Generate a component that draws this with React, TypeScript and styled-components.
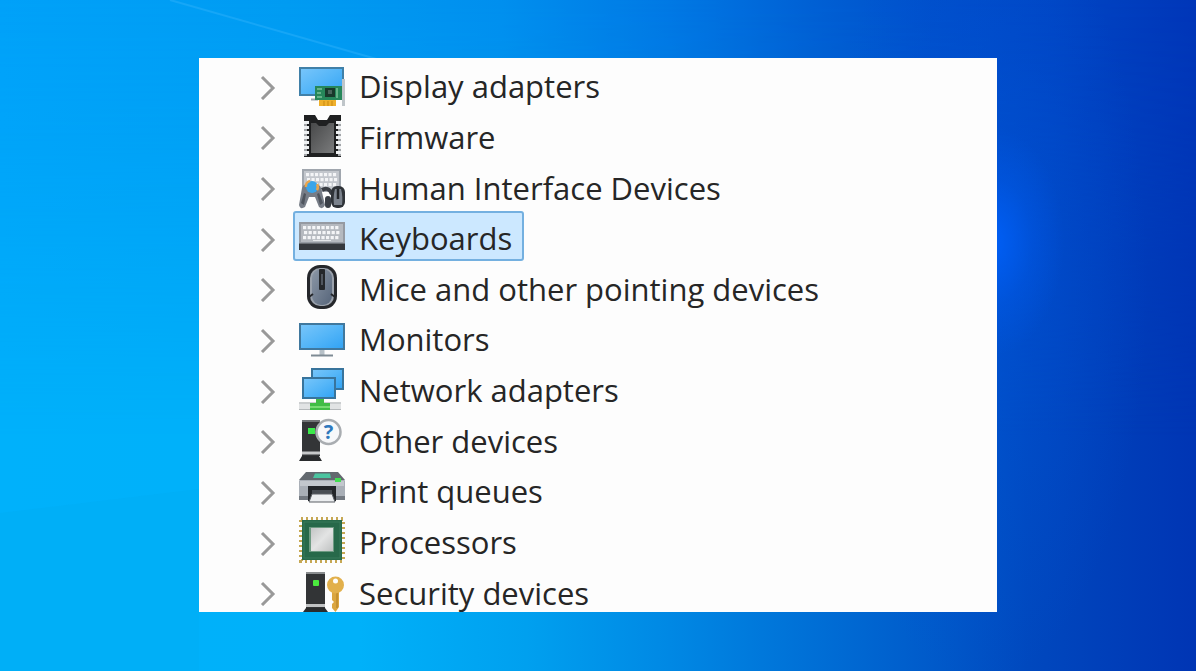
import React from "react";
import styled, { createGlobalStyle } from "styled-components";

const GlobalStyle = createGlobalStyle`
  * { box-sizing: border-box; }
  html, body, #root { margin: 0; height: 100%; }
`;

const Desktop = styled.main`
  position: relative;
  isolation: isolate;
  min-height: 100vh;
  padding: 58px 199px 59px;
  font-family: "Open Sans", "Segoe UI", sans-serif;
  color: #262626;
  background: linear-gradient(90deg, #00b1fb 0%, #00b1f9 30%, #00a0ef 44%, #0088e4 56%, #006fd6 68%, #005aca 78%, #0048be 86%, #0035b4 100%);

  &::before {
    content: "";
    position: absolute;
    inset: 0;
    z-index: -2;
    background: linear-gradient(90deg, #00a1f9 0%, #009bf2 24%, #008fee 42%, #0078e4 56%, #0060d4 68%, #004fca 78%, #0046c4 88%, #0036b8 100%);
    mask-image: linear-gradient(180deg, #000 0%, rgba(0, 0, 0, 0.8) 20%, transparent 65%);
  }

  &::after {
    content: "";
    position: absolute;
    inset: 0;
    z-index: -1;
    background:
      radial-gradient(ellipse 6% 17% at 83% 36%, rgba(0, 98, 255, 0.8), rgba(0, 98, 255, 0.25) 55%, rgba(0, 98, 255, 0)),
      radial-gradient(ellipse 14% 60% at 82% 42%, rgba(0, 84, 220, 0.5), rgba(0, 84, 220, 0));
  }
`;

const Rays = styled.svg`
  position: absolute;
  inset: 0;
  z-index: -1;
  width: 100%;
  height: 100%;
`;

const Panel = styled.section`
  height: calc(100vh - 117px);
  min-height: 554px;
  padding: 1px 0 0 56px;
  background: #fdfdfd;
`;

const Tree = styled.ul`
  display: grid;
  grid-auto-rows: 1fr;
  height: calc(100% + 4px);
  margin: 0;
  padding: 0;
  list-style: none;
`;

const Row = styled.li`
  display: flex;
  align-items: center;
  gap: 12px;
`;

const Toggle = styled.button`
  display: flex;
  padding: 5px 0 0;
  border: 0;
  background: none;
`;

const Item = styled.a<{ $selected?: boolean }>`
  display: flex;
  align-items: center;
  gap: 14px;
  height: 50px;
  padding: 4px 10px 0 4px;
  border: 2px solid ${(p) => (p.$selected ? "#74b0e0" : "transparent")};
  border-radius: 3px;
  background: ${(p) => (p.$selected ? "#cce8ff" : "transparent")};
  color: inherit;
  text-decoration: none;
`;

const Label = styled.span`
  font-size: 31px;
  line-height: 36px;
  white-space: nowrap;
`;

const IconBox = styled.svg`
  display: block;
  flex: none;
  width: 46px;
  height: 46px;
  overflow: visible;
`;

const keyRows = (x: number, y: number, cols: number, pitch: number) =>
  [0, 1, 2].flatMap((r) =>
    Array.from({ length: cols }, (_, c) => (
      <rect key={`${r}-${c}`} x={x + c * pitch + (r % 2)} y={y + r * 5} width={pitch - 1.4} height="3.2" fill="#f4f5f7" />
    ))
  );

const DisplayIcon = () => (
  <>
    <rect x="1" y="5" width="43" height="27" fill="url(#screen)" stroke="#4080a8" strokeWidth="2" />
    <path d="M12 36.500H19" stroke="#9aa3a8" strokeWidth="2" />
    <rect x="20" y="36" width="17" height="7" fill="#efb02c" />
    <path d="M25 38V43M29 38V43M33 38V43" stroke="#c98910" />
    <rect x="16" y="23" width="28" height="14" fill="#26875a" />
    <path d="M18 26H23M18 30H22M18 34H23M38 25V35" stroke="#7cc39b" strokeWidth="1.500" />
    <rect x="26" y="25" width="10" height="9" fill="#18392b" />
    <rect x="29" y="27" width="4" height="4" fill="#49645a" />
    <rect x="43" y="16" width="3" height="27" fill="#bfc5c9" />
  </>
);

const FirmwareIcon = () => (
  <>
    <path d="M5 1H16L19 6H28L31 1H42V43H5Z" fill="#1f2021" />
    <path d="M12 9H17L20 12H27L30 9H35V39H12Z" fill="url(#chip)" />
    {[7, 12, 17, 22, 27, 32, 37].map((y) => (
      <React.Fragment key={y}>
        <rect x="5" y={y} width="5" height="3" fill="#eef0f2" />
        <rect x="37" y={y} width="5" height="3" fill="#eef0f2" />
        <rect x="5" y={y + 3} width="3" height="2" fill="#a3a6a9" />
        <rect x="39" y={y + 3} width="3" height="2" fill="#a3a6a9" />
      </React.Fragment>
    ))}
  </>
);

const HidIcon = () => (
  <>
    <path d="M3 4H42V27H3Z" fill="#a0a6ae" />
    <path d="M5 6H40V25H5Z" fill="#c3c7cd" />
    {keyRows(7, 8, 7, 4.5)}
    <path d="M23 25Q29 21 33 29" fill="none" stroke="#3b3f45" strokeWidth="4" />
    <path d="M0 40L3 23Q5 18 12.500 18T22 23L26 40Q24 45 20 42L16 32H10L6 42Q1 45 0 40Z" fill="#777d87" />
    <path d="M2 38L5 28L7 29L5 40ZM24 38L20 28L18 29L21 40Z" fill="#4f555e" />
    <circle cx="13" cy="22" r="6" fill="#3aa5ea" />
    <path d="M7 22A5 5 0 0 1 11 16M18 19A6 6 0 0 1 18 25" fill="none" stroke="#e9a54c" strokeWidth="2.500" />
    <rect x="32" y="21" width="14" height="22" rx="6" fill="#2f3338" />
    <path d="M36 24H42Q44 31 43 40H35Q34 31 36 24Z" fill="#7b828c" />
    <path d="M39 24V34" stroke="#24272b" strokeWidth="2.500" />
    <rect x="26" y="31" width="6" height="12" rx="3" fill="#3a3f46" />
  </>
);

const KeyboardIcon = () => (
  <>
    <rect x="0" y="7" width="46" height="24" fill="#959aa2" />
    <rect x="2" y="9" width="42" height="18" fill="#b5b9bf" />
    {keyRows(4, 11, 8, 4.6)}
    <path d="M14 25.500H32" stroke="#e5e7ea" />
    <rect x="0" y="28" width="46" height="7" fill="#35383d" />
    <path d="M0 28.500H46" stroke="#6b6f75" />
  </>
);

const MouseIcon = () => (
  <>
    <rect x="8" y="-1" width="30" height="44" rx="13" fill="#25272b" />
    <rect x="11" y="2" width="24" height="38" rx="10" fill="#9ba2ac" />
    <rect x="13" y="3" width="20" height="36" rx="9" fill="url(#mouse)" />
    <path d="M10 31L14 28M36 31L32 28" stroke="#25272b" strokeWidth="2" />
    <rect x="20" y="3" width="6" height="21" rx="1" fill="#24272b" />
    <path d="M23 8V19" stroke="#50565f" strokeWidth="2" />
  </>
);

const MonitorIcon = () => (
  <>
    <rect x="1" y="8" width="44" height="25" fill="url(#screen)" stroke="#40789e" strokeWidth="2" />
    <path d="M23 34V39" stroke="#b7c1c8" strokeWidth="5" />
    <path d="M12 39.500H34" stroke="#7e8b94" strokeWidth="2" />
  </>
);

const NetworkIcon = () => (
  <>
    <rect x="13" y="2" width="31" height="20" fill="url(#screen)" stroke="#38749c" strokeWidth="2" />
    <rect x="4" y="11" width="32" height="20" fill="url(#screen)" stroke="#38749c" strokeWidth="2" />
    <rect x="0" y="35" width="42" height="8" fill="#e1e3e4" />
    <path d="M0 36H42M0 42.500H42" stroke="#b4b8ba" />
    <path d="M17 32H25V36H31V43H11V36H17Z" fill="#41bd46" />
    <path d="M11 40H31" stroke="#77dc73" strokeWidth="2" />
  </>
);

const OtherIcon = () => (
  <>
    <rect x="3" y="2" width="18" height="36" fill="#333537" />
    <path d="M3 3H21" stroke="#717476" strokeWidth="2" />
    <rect x="9" y="10" width="7" height="6" fill="#3bea4b" />
    <path d="M3 35H21" stroke="#c7c9ca" strokeWidth="3" />
    <path d="M3 38H20L23 43H0Z" fill="#292b2d" />
    <circle cx="29.500" cy="14" r="12" fill="#f7f8fa" stroke="#a9adb1" strokeWidth="2.500" />
    <text x="29.500" y="21" textAnchor="middle" fontFamily="Open Sans, sans-serif" fontSize="20" fontWeight="700" fill="#2f78bd">?</text>
  </>
);

const PrinterIcon = () => (
  <>
    <path d="M7 4H39L46 12H0Z" fill="#63696f" />
    <path d="M16 5.500H31L32 10H14Z" fill="#4bc5a0" />
    <rect x="0" y="12" width="46" height="20" rx="1" fill="#a9afb7" />
    <path d="M1 13H45V18H1Z" fill="#c2c7cd" />
    <rect x="36" y="10" width="6" height="4" fill="#41df52" />
    <path d="M0 28H46V32H0Z" fill="#737981" />
    <path d="M9 18H37V33H9Z" fill="#222529" />
    <path d="M13 22H33V26H13Z" fill="#484d53" />
    <path d="M13 26H33L36 34H10Z" fill="#eceef0" stroke="#5a5f65" />
  </>
);

const ProcessorIcon = () => (
  <>
    <rect x="2" y="0" width="42" height="42" fill="none" stroke="#c6a854" strokeWidth="4" strokeDasharray="2 3" />
    <rect x="3" y="1" width="40" height="40" fill="#27694a" />
    <rect x="5" y="3" width="36" height="36" fill="none" stroke="#397b5a" />
    <rect x="10" y="8" width="25" height="25" fill="#6d9a82" />
    <rect x="12" y="9" width="22" height="23" fill="url(#die)" />
  </>
);

const SecurityIcon = () => (
  <>
    <rect x="7" y="2" width="19" height="37" fill="#323436" />
    <path d="M7 3H26" stroke="#8a8d8f" strokeWidth="2" />
    <rect x="14" y="10" width="6" height="6" rx="1" fill="#4bea3e" />
    <path d="M7 35.500H26" stroke="#c0c2c3" strokeWidth="3" />
    <path d="M7 38H26L29 42H4Z" fill="#292b2d" />
    <path d="M33 20H40V37L36.500 42L33 38V34L35 32L33 30Z" fill="#dba640" />
    <path d="M38 22V38" stroke="#b17c20" />
    <circle cx="36.500" cy="15" r="8.500" fill="#e2b04c" />
    <circle cx="36.500" cy="11" r="2.500" fill="#fdfdfd" />
  </>
);

const SharedPaints = () => (
  <defs>
    <linearGradient id="screen" x1="0" y1="0" x2="1" y2="1">
      <stop offset="0" stopColor="#79c6fa" />
      <stop offset="0.500" stopColor="#55b6f8" />
      <stop offset="1" stopColor="#30a2f4" />
    </linearGradient>
    <linearGradient id="chip" x1="0" y1="0" x2="1" y2="1">
      <stop offset="0" stopColor="#48494a" />
      <stop offset="1" stopColor="#7a7b7c" />
    </linearGradient>
    <linearGradient id="mouse" x1="0" y1="0" x2="1" y2="1">
      <stop offset="0" stopColor="#8c97a6" />
      <stop offset="1" stopColor="#56657a" />
    </linearGradient>
    <linearGradient id="die" x1="0" y1="0" x2="1" y2="1">
      <stop offset="0" stopColor="#c3c5c5" />
      <stop offset="0.500" stopColor="#e3e4e4" />
      <stop offset="1" stopColor="#bfc1c1" />
    </linearGradient>
  </defs>
);

const devices = [
  { name: "Display adapters", Icon: DisplayIcon },
  { name: "Firmware", Icon: FirmwareIcon },
  { name: "Human Interface Devices", Icon: HidIcon },
  { name: "Keyboards", Icon: KeyboardIcon, selected: true },
  { name: "Mice and other pointing devices", Icon: MouseIcon },
  { name: "Monitors", Icon: MonitorIcon },
  { name: "Network adapters", Icon: NetworkIcon },
  { name: "Other devices", Icon: OtherIcon },
  { name: "Print queues", Icon: PrinterIcon },
  { name: "Processors", Icon: ProcessorIcon },
  { name: "Security devices", Icon: SecurityIcon },
];

export default function App() {
  return (
    <Desktop>
      <GlobalStyle />
      <Rays viewBox="0 0 1196 671" preserveAspectRatio="none" aria-hidden="true">
        <SharedPaints />
        <path d="M170 0L380 60" stroke="#2cb0fa" strokeWidth="2" opacity="0.5" />
        <path d="M0 513L199 489V671H0Z" fill="#00a4e8" opacity="0.18" />
      </Rays>
      <Panel>
        <Tree>
          {devices.map(({ name, Icon, selected }) => (
            <Row key={name}>
              <Toggle type="button" aria-label={`Expand ${name}`}>
                <svg width="26" height="26" viewBox="0 0 26 26" fill="none" stroke="#999" strokeWidth="3">
                  <path d="M7 3L18 14L7 25" />
                </svg>
              </Toggle>
              <Item href="#" $selected={selected} aria-current={selected}>
                <IconBox viewBox="0 0 46 46" aria-hidden="true">
                  <Icon />
                </IconBox>
                <Label>{name}</Label>
              </Item>
            </Row>
          ))}
        </Tree>
      </Panel>
    </Desktop>
  );
}
